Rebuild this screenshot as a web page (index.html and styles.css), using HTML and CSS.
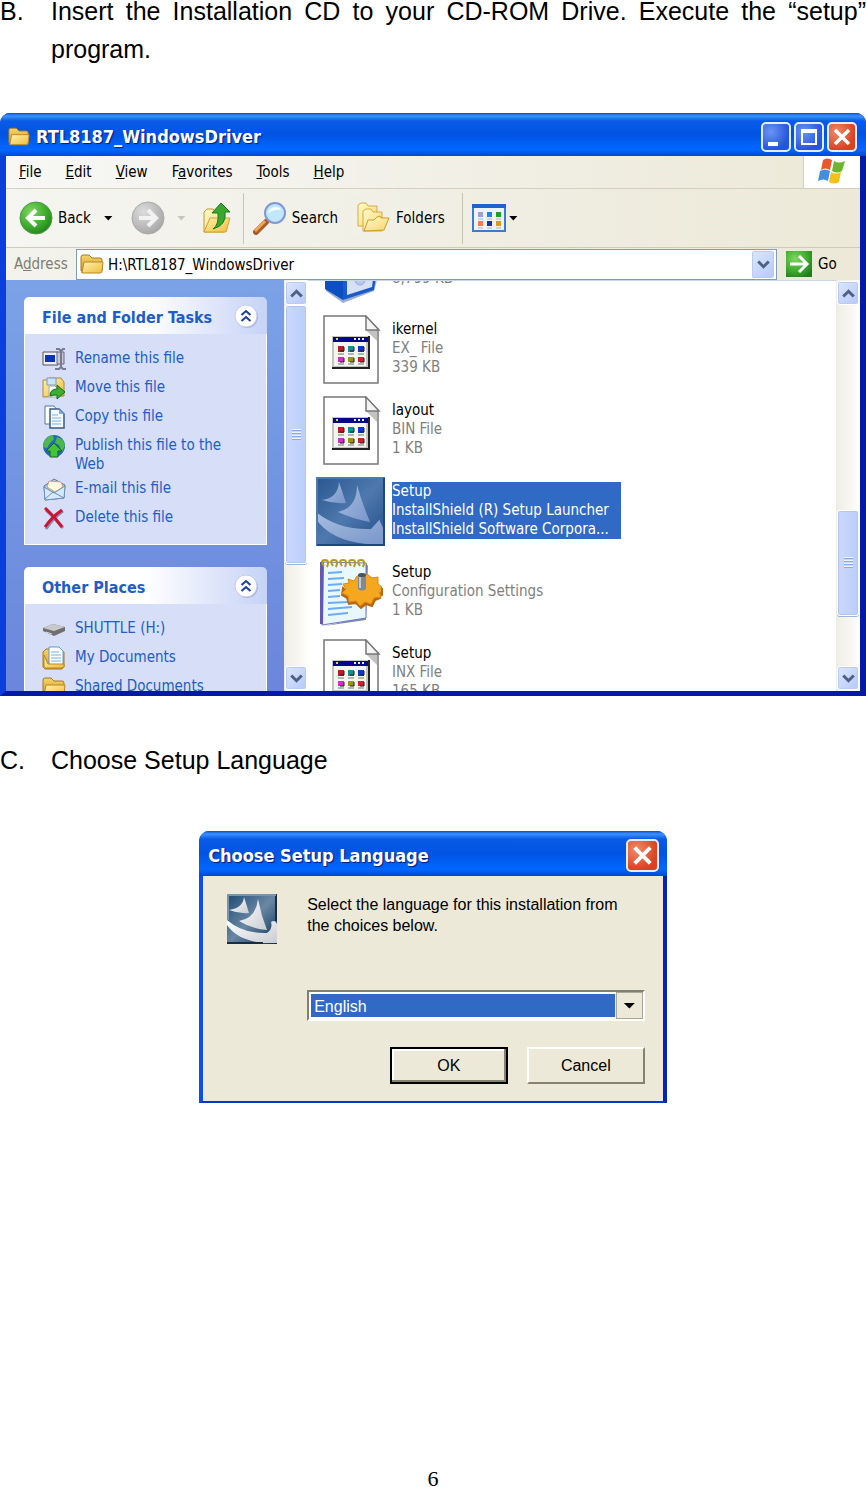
FILE: index.html
```html
<!DOCTYPE html>
<html lang="en">
<head>
    <meta charset="UTF-8">
    <meta name="viewport" content="width=device-width, initial-scale=1.0">
    <title>Driver Installation Guide</title>
    <link rel="stylesheet" href="styles.css">
</head>
<body>
    <!-- Shared icons -->
    <svg class="defs" aria-hidden="true">
        <defs>
            <linearGradient id="gold" x1="0" y1="0" x2="1" y2="1"><stop offset="0" stop-color="#fff3ae"/><stop offset="1" stop-color="#eebc3c"/></linearGradient>
            <linearGradient id="goldBack" x1="0" y1="0" x2="0" y2="1"><stop offset="0" stop-color="#f5d569"/><stop offset="1" stop-color="#d8992a"/></linearGradient>
            <linearGradient id="paleGold" x1="0" y1="0" x2="1" y2="1"><stop offset="0" stop-color="#fffbd0"/><stop offset="1" stop-color="#f7d667"/></linearGradient>
            <radialGradient id="green" cx=".35" cy=".3" r=".8"><stop offset="0" stop-color="#7dd65f"/><stop offset=".6" stop-color="#3cab2c"/><stop offset="1" stop-color="#1f7d1c"/></radialGradient>
            <radialGradient id="grey" cx=".35" cy=".3" r=".8"><stop offset="0" stop-color="#dcdcdc"/><stop offset="1" stop-color="#a3a3a3"/></radialGradient>
            <linearGradient id="navy" x1="0" y1="0" x2="1" y2="1"><stop offset="0" stop-color="#1e4a74"/><stop offset=".5" stop-color="#6888a4"/><stop offset="1" stop-color="#0c2d50"/></linearGradient>
            <linearGradient id="sail" x1="0" y1="0" x2="1" y2="1"><stop offset="0" stop-color="#ffffff"/><stop offset="1" stop-color="#c9ccd2"/></linearGradient>
            <linearGradient id="blueTile" x1="0" y1="0" x2="1" y2="1"><stop offset="0" stop-color="#27568f"/><stop offset=".5" stop-color="#4f79ae"/><stop offset="1" stop-color="#1d4a86"/></linearGradient>
            <linearGradient id="blueSail" x1="0" y1="0" x2="1" y2="1"><stop offset="0" stop-color="#a9bee0"/><stop offset="1" stop-color="#7896ca"/></linearGradient>
        </defs>
        <symbol id="folder" viewBox="0 0 24 22">
            <path d="M1 18V4q0-2 2-2h6l3 3h8q2 0 2 2v11z" fill="url(#goldBack)" stroke="#a8781c"/>
            <path d="M2 19.500L4 9h19l-1 9q0 2-2 2H3q-2 0-1-1z" fill="url(#gold)" stroke="#b98720"/>
        </symbol>
        <symbol id="appfile" viewBox="0 0 69 69">
            <path d="M8 1h41l13 13v54H8z" fill="#fff" stroke="#777" stroke-width="1.500"/>
            <path d="M50 15l12 12V15z" fill="#999" opacity=".6"/>
            <path d="M50 1v14h13z" fill="#f4f4f4" stroke="#777" stroke-width="1.500"/>
            <path d="M16 21h38v33H16z" fill="#222"/>
            <path d="M16 21h36v31H16z" fill="#c6c5bd"/>
            <path d="M18 27h32v24H18z" fill="#f5f5f0"/>
            <path d="M17 22h35v5H17z" fill="#06068c"/>
            <path d="M20 23h2v2h-2z" fill="#dfd830"/>
            <path d="M38 23h2v2h-2zM42 23h2v2h-2zM46 23h2v2h-2z" fill="#eee"/>
            <path d="M22 31h6v6h-6z" fill="#c0182b"/><path d="M32 31h6v6h-6z" fill="#169191"/><path d="M42 31h6v6h-6z" fill="#1237cf"/>
            <path d="M22 42h6v5h-6z" fill="#d42bc9"/><path d="M32 42h6v5h-6z" fill="#96951b"/><path d="M42 42h6v5h-6z" fill="#cf1f32"/>
            <path d="M22 39h6M32 39h6M42 39h6M22 49h6M32 49h6M42 49h6" stroke="#777"/>
            <path d="M24 36h4v-4M34 36h4v-4M44 36h4v-4M24 47h4v-4M34 47h4v-4M44 47h4v-4" fill="none" stroke="#222"/>
        </symbol>
        <symbol id="chevrons" viewBox="0 0 26 26">
            <circle cx="14" cy="14" r="11" fill="#8d9cc8" opacity=".6"/>
            <circle cx="13" cy="13" r="11" fill="#fff" stroke="#c3cbe6"/>
            <path d="M8.500 12l4.500-4 4.500 4M8.500 18l4.500-4 4.500 4" fill="none" stroke="#1a3f9c" stroke-width="2"/>
        </symbol>
        <symbol id="up" viewBox="0 0 20 20"><path d="M3 14l7-7 7 7" fill="none" stroke="#4d6185" stroke-width="4"/></symbol>
        <symbol id="down" viewBox="0 0 20 20"><path d="M3 6l7 7 7-7" fill="none" stroke="#4d6185" stroke-width="4"/></symbol>
        <symbol id="cross" viewBox="0 0 26 26"><path d="M6 6l14 14M20 6L6 20" stroke="#fff" stroke-width="3.500"/></symbol>
    </svg>

    <main class="page">
        <section class="step">
            <span class="letter">B.</span>
            <p>Insert the Installation CD to your CD-ROM Drive. Execute the “setup” program.</p>
        </section>

        <div class="window">
            <div class="title-bar">
                <svg class="title-icon"><use href="#folder"/></svg>
                <h2>RTL8187_WindowsDriver</h2>
                <button class="win-btn" aria-label="Minimize"><svg viewBox="0 0 26 26"><path d="M5 18h10v4H5z" fill="#fff"/></svg></button>
                <button class="win-btn" aria-label="Maximize"><svg viewBox="0 0 26 26"><path d="M6 7h14v13H6z" fill="none" stroke="#fff" stroke-width="2"/><path d="M5 5h16v4H5z" fill="#fff"/></svg></button>
                <button class="win-btn close" aria-label="Close"><svg><use href="#cross"/></svg></button>
            </div>

            <div class="menu-bar">
                <nav>
                    <button><u>F</u>ile</button>
                    <button><u>E</u>dit</button>
                    <button><u>V</u>iew</button>
                    <button>F<u>a</u>vorites</button>
                    <button><u>T</u>ools</button>
                    <button><u>H</u>elp</button>
                </nav>
                <div class="flag">
                    <svg viewBox="0 0 30 28">
                        <path d="M6 3q4-3 9 0l-2 10q-5-3-9 0z" fill="#e8582a"/>
                        <path d="M17 4q5 3 11 0l-3 10q-5 3-10 0z" fill="#6ab62e"/>
                        <path d="M3 14q5-3 10 0l-2 10q-5-3-10 0z" fill="#4290dc"/>
                        <path d="M14 15q5 3 10 0l-2 10q-5 3-10 0z" fill="#f3c117"/>
                    </svg>
                </div>
            </div>

            <div class="toolbar">
                <button class="tool">
                    <svg class="icon-lg" viewBox="0 0 34 34"><circle cx="17" cy="17" r="16" fill="url(#green)" stroke="#4b9a43"/><path d="M26 17H10M17 9l-8 8 8 8" fill="none" stroke="#fff" stroke-width="4"/></svg>
                    Back
                </button>
                <button class="arrow" aria-label="Back history"></button>
                <button class="tool" aria-label="Forward">
                    <svg class="icon-lg" viewBox="0 0 34 34"><circle cx="17" cy="17" r="16" fill="url(#grey)" stroke="#aaa"/><path d="M8 17h16M17 9l8 8-8 8" fill="none" stroke="#f2f2f2" stroke-width="4"/></svg>
                </button>
                <button class="arrow off" aria-label="Forward history"></button>
                <button class="tool" aria-label="Up">
                    <svg class="icon-lg" viewBox="0 0 34 34">
                        <path d="M4 31V11l3-3h6l3 3h8v20z" fill="url(#paleGold)" stroke="#c8962a"/>
                        <path d="M4 31l6-14h20l-4 14z" fill="url(#gold)" stroke="#d3a034"/>
                        <path d="M13 28q6-4 5-16h-6l9-10 9 9h-5q2 13-12 17z" fill="#39a82f" stroke="#1d7a1d"/>
                    </svg>
                </button>
                <span class="divider"></span>
                <button class="tool">
                    <svg class="icon-lg" viewBox="0 0 34 34">
                        <path d="M3 31l10-10" stroke="#a95d28" stroke-width="6" stroke-linecap="round"/>
                        <path d="M2 30l10-10" stroke="#f1a65a" stroke-width="3"/>
                        <circle cx="22" cy="12" r="10" fill="#c0e7fb" stroke="#8296d4" stroke-width="2"/>
                        <path d="M15 13q1-7 8-7 4 0 5 3-7-1-13 4z" fill="#f3fcff"/>
                    </svg>
                    Search
                </button>
                <button class="tool folders">
                    <svg class="icon-lg" viewBox="0 0 34 34">
                        <path d="M1 25V4l3-2h5l2 3h9v20z" fill="url(#paleGold)" stroke="#d9ab40"/>
                        <path d="M6 30V10l3-2h5l2 3h9v19z" fill="url(#paleGold)" stroke="#d9ab40"/>
                        <path d="M7 30l4-11h6l3-3 3-1 1 2h8l-5 12z" fill="url(#paleGold)" stroke="#cf9a2c"/>
                    </svg>
                    Folders
                </button>
                <span class="divider"></span>
                <button class="tool" aria-label="Views">
                    <svg class="icon-lg" viewBox="0 0 34 34">
                        <path d="M1 4h32v26H1z" fill="#eaf3ff" stroke="#3a7cd2" stroke-width="2"/>
                        <path d="M0 3h34v4H0z" fill="#1c62d4"/>
                        <path d="M6 11h5v5H6z" fill="#a79dc9"/><path d="M15 11h5v5h-5z" fill="#1d84e6"/><path d="M24 11h5v5h-5z" fill="#1aa321"/>
                        <path d="M6 20h5v5H6z" fill="#fb7a4c"/><path d="M15 20h5v5h-5z" fill="#12389c"/><path d="M24 20h5v5h-5z" fill="#d5a011"/>
                        <path d="M6 18h5M15 18h5M24 18h5M6 27h5M15 27h5M24 27h5" stroke="#b4b4b4"/>
                    </svg>
                </button>
                <button class="arrow last" aria-label="View options"></button>
            </div>

            <div class="address-bar">
                <label for="address">A<u>d</u>dress</label>
                <div class="address-field">
                    <svg class="icon"><use href="#folder"/></svg>
                    <input id="address" type="text" value="H:\RTL8187_WindowsDriver">
                    <button class="scroll-btn" aria-label="Show addresses"><svg><use href="#down"/></svg></button>
                </div>
                <button class="go">
                    <svg viewBox="0 0 26 26"><path d="M0 0h26v26H0z" fill="url(#green)"/><path d="M4 13h16M13 5l8 8-8 8" fill="none" stroke="#fff" stroke-width="3"/></svg>
                    Go
                </button>
            </div>

            <div class="content">
                <aside class="sidebar">
                    <section class="panel">
                        <header>
                            <h3>File and Folder Tasks</h3>
                            <button aria-label="Collapse tasks"><svg><use href="#chevrons"/></svg></button>
                        </header>
                        <ul>
                            <li>
                                <svg class="icon" viewBox="0 0 24 24"><path d="M1 5h15v13H1z" fill="#eef" stroke="#555"/><path d="M3 8h10v7H3z" fill="#0a35b8"/><path d="M15 5h7v12h-7z" fill="#c9c9d4" stroke="#666a80"/><path d="M14 2h3l2 2 2-2h2M19 3v18M13 22h4l2-2 2 2h3" fill="none" stroke="#777a92" stroke-width="2"/></svg>
                                <a href="#">Rename this file</a>
                            </li>
                            <li>
                                <svg class="icon" viewBox="0 0 24 24"><path d="M1 21V4h4l2-2h12l3 4v14z" fill="url(#gold)" stroke="#a78545"/><path d="M5 2h9v7H5z" fill="#c9e5fb" stroke="#7c9cc0"/><path d="M7 10h6l3 3v8H7z" fill="#fff" stroke="#aaa"/><path d="M8 20q0-7 7-7v-4l8 7-8 7v-4q-4 0-7 1z" fill="#3caf2e" stroke="#17681a"/></svg>
                                <a href="#">Move this file</a>
                            </li>
                            <li>
                                <svg class="icon" viewBox="0 0 24 24"><path d="M3 1h9l3 4v14H3z" fill="#fff" stroke="#53789c"/><path d="M8 4h9l5 5v14H8z" fill="#f2faff" stroke="#3a5d80" stroke-width="1.500"/><path d="M17 4v5h5z" fill="#78b4dc"/><path d="M10 10h6M10 13h9M10 16h9M10 19h9" stroke="#7fb2da"/></svg>
                                <a href="#">Copy this file</a>
                            </li>
                            <li>
                                <svg class="icon" viewBox="0 0 24 24"><circle cx="12" cy="12" r="11" fill="#2468bc"/><path d="M2 8q3-6 9-7l1 4-4 4-3 5-4-1zM15 3q6 1 8 8l-3 7-3-7-4-2z" fill="#4fb948"/><path d="M12 9l8 8h-4v6H8v-6H4z" fill="#45c336" stroke="#15641a"/></svg>
                                <a href="#">Publish this file to the Web</a>
                            </li>
                            <li>
                                <svg class="icon" viewBox="0 0 24 24"><path d="M2 9l10-7 11 6-1 13-19 2z" fill="#a7c8ea" stroke="#5d7899"/><path d="M5 10l2-6 12 1 2 5-8 5z" fill="#fff8e5" stroke="#caa76c"/><path d="M2 10l10 6 11-7-1 12-19 2z" fill="#d4e9fc" stroke="#6f90b5"/><path d="M3 22l8-7 11 6" fill="none" stroke="#6f90b5"/></svg>
                                <a href="#">E-mail this file</a>
                            </li>
                            <li>
                                <svg class="icon" viewBox="0 0 24 24"><path d="M4 4q8 7 17 18M21 5Q11 12 4 23" fill="none" stroke="#8a8fa8" stroke-width="3"/><path d="M3 2q9 8 17 19M20 4Q10 11 3 21" fill="none" stroke="#cf1335" stroke-width="3"/></svg>
                                <a href="#">Delete this file</a>
                            </li>
                        </ul>
                    </section>

                    <section class="panel">
                        <header>
                            <h3>Other Places</h3>
                            <button aria-label="Collapse places"><svg><use href="#chevrons"/></svg></button>
                        </header>
                        <ul>
                            <li>
                                <svg class="icon" viewBox="0 0 24 24"><path d="M1 11l10-4 12 3v4l-11 5-11-5z" fill="#6f6f6f"/><path d="M1 11l10-4 12 3-11 4z" fill="#c9c9c9"/><path d="M4 15l6 2" stroke="#ddd"/></svg>
                                <a href="#">SHUTTLE (H:)</a>
                            </li>
                            <li>
                                <svg class="icon" viewBox="0 0 24 24"><path d="M1 21V6l3-3h5l2 3h11v15l-2 2H3z" fill="url(#goldBack)" stroke="#a8781c"/><path d="M7 1h10l4 4v14H7z" fill="#fff" stroke="#5f96cb"/><path d="M9 6h8M9 9h10M9 12h10M9 15h10" stroke="#6faee2"/><path d="M2 22V9l4 9h16v3l-2 1z" fill="url(#gold)" stroke="#b98720"/></svg>
                                <a href="#">My Documents</a>
                            </li>
                            <li>
                                <svg class="icon"><use href="#folder"/></svg>
                                <a href="#">Shared Documents</a>
                            </li>
                        </ul>
                    </section>
                </aside>

                <div class="scrollbar tasks-scroll">
                    <button class="scroll-btn" aria-label="Scroll tasks up"><svg><use href="#up"/></svg></button>
                    <div class="track"><div class="thumb"></div></div>
                    <button class="scroll-btn" aria-label="Scroll tasks down"><svg><use href="#down"/></svg></button>
                </div>

                <div class="file-pane">
                    <ul class="files">
                        <li class="cut">
                            <svg class="file-icon" viewBox="0 35 69 34"><path d="M10 35h54l-6 22-31 12-17-12z" fill="#9caed0"/><path d="M9 35l18 6v25L9 55z" fill="#0b4fc0"/><path d="M27 41l34-6-3 21-31 10z" fill="#1b5bc9"/><path d="M31 42l27-5-2 16-25 8z" fill="#d7e1f6"/><circle cx="44" cy="46" r="5" fill="#b8c7ec" stroke="#94a7d8"/></svg>
                            <p class="info"><span>8,799 KB</span></p>
                        </li>
                        <li>
                            <svg class="file-icon"><use href="#appfile"/></svg>
                            <p class="info"><b>ikernel</b><span>EX_ File</span><span>339 KB</span></p>
                        </li>
                        <li>
                            <svg class="file-icon"><use href="#appfile"/></svg>
                            <p class="info"><b>layout</b><span>BIN File</span><span>1 KB</span></p>
                        </li>
                        <li class="selected">
                            <svg class="file-icon" viewBox="0 0 69 69">
                                <path d="M0 0h69v69H0z" fill="url(#blueTile)"/>
                                <path d="M23 5l7 21q-12 1-24-3 16-2 17-18z" fill="url(#blueSail)"/>
                                <path d="M41 8q5 18 13 37-17-3-32-10 19-4 19-27z" fill="url(#blueSail)"/>
                                <path d="M0 35q22 18 55 17l9-10 5 5v20H50Q14 63 0 42z" fill="url(#blueSail)"/>
                                <path d="M63 42q4-3 6 1l-2 8z" fill="#34629f"/>
                                <path d="M1 68V1h67" fill="none" stroke="#5078b0" stroke-width="2"/>
                                <path d="M1 68h67V1" fill="none" stroke="#1e477c" stroke-width="2"/>
                            </svg>
                            <p class="info"><b>Setup</b><span>InstallShield (R) Setup Launcher</span><span>InstallShield Software Corpora...</span></p>
                        </li>
                        <li>
                            <svg class="file-icon" viewBox="0 0 69 69">
                                <path d="M8 68l42-6 2-54-2-3v54z" fill="#7f8ca0"/>
                                <path d="M5 4l45 1v55L6 67z" fill="#e9f8ff" stroke="#6a75c9"/>
                                <path d="M4 4h4L7 66H4z" fill="#6159b6"/>
                                <path d="M12 15l14-1M12 21l16-1M12 27l14-1M12 33l12-1M12 39l12-1M12 45l20-1M12 51l24-2M12 57l20-2" stroke="#6cacf0" stroke-width="2"/>
                                <path d="M8 8q-4-6 1-6t2 7M17 8q-4-6 1-6t2 7M26 8q-4-6 1-6t2 7M35 8q-4-6 1-6t2 7M44 8q-4-6 1-6t2 7" fill="none" stroke="#b59b1c" stroke-width="2"/>
                                <path d="M27 30l6 6 1 6 7-1 4 5 5-4 6 2 3-6 7-1v-7l-2 10-5 2-3 6-6-2-5 4-5-5-7 1-2-6-5-3z" fill="#b9690d" stroke="#b9690d" stroke-width="2"/>
                                <path d="M32 21l6 2 3-5 7 1 3-3 5 4 6-1v7l4 3-3 4 2 6-7 1-3 6-6-2-5 4-4-5-7 1-1-6-6-3 4-4-3-5 6-1z" fill="#f5a81f" stroke="#d58a18"/>
                                <path d="M42 17q4-4 8 0v14q-4 3-8 0z" fill="#7f8994"/><ellipse cx="46" cy="17" rx="4" ry="2" fill="#4d545c"/><path d="M44 19v11" stroke="#c3cad0" stroke-width="2"/>
                            </svg>
                            <p class="info"><b>Setup</b><span>Configuration Settings</span><span>1 KB</span></p>
                        </li>
                        <li>
                            <svg class="file-icon"><use href="#appfile"/></svg>
                            <p class="info"><b>Setup</b><span>INX File</span><span>165 KB</span></p>
                        </li>
                    </ul>
                </div>

                <div class="scrollbar files-scroll">
                    <button class="scroll-btn" aria-label="Scroll files up"><svg><use href="#up"/></svg></button>
                    <div class="track"><div class="thumb"></div></div>
                    <button class="scroll-btn" aria-label="Scroll files down"><svg><use href="#down"/></svg></button>
                </div>
            </div>
        </div>

        <section class="step">
            <span class="letter">C.</span>
            <p>Choose Setup Language</p>
        </section>

        <form class="dialog">
            <div class="title-bar">
                <h2>Choose Setup Language</h2>
                <button type="button" class="win-btn close" aria-label="Close"><svg><use href="#cross"/></svg></button>
            </div>
            <div class="dialog-body">
                <svg class="logo" viewBox="0 0 50 50">
                    <path d="M0 0h50v50H0z" fill="url(#navy)"/>
                    <path d="M17 3l5 16q-10 1-20-3 14-2 15-13z" fill="url(#sail)"/>
                    <path d="M31 5q3 16 9 31-15-1-28-9 17-3 19-22z" fill="url(#sail)"/>
                    <path d="M0 26q16 14 40 13 6-4 4-11 4-3 6 2v19H36Q10 46 0 31z" fill="url(#sail)"/>
                    <path d="M0 49h36M49 0v27" fill="none" stroke="#1b2c40" stroke-width="2"/>
                    <path d="M1 26V1h48" fill="none" stroke="#7796ad" stroke-width="2"/>
                </svg>
                <div class="fields">
                    <label for="language">Select the language for this installation from the choices below.</label>
                    <div class="select-box">
                        <select id="language">
                            <option>English</option>
                        </select>
                        <span class="select-arrow"></span>
                    </div>
                </div>
                <div class="actions">
                    <button type="button" class="btn default">OK</button>
                    <button type="button" class="btn">Cancel</button>
                </div>
            </div>
        </form>

        <footer>6</footer>
    </main>
</body>
</html>
```
FILE: styles.css
```css
* {
    margin: 0;
    padding: 0;
    box-sizing: border-box;
}

body {
    background: #fff;
    color: #000;
    font-family: "Liberation Sans", Arial, sans-serif;
}

ul {
    list-style: none;
}

svg {
    display: block;
    flex-shrink: 0;
}

button {
    border: none;
    background: none;
    font: inherit;
    color: inherit;
}

.defs {
    position: absolute;
    width: 0;
    height: 0;
}

.page {
    display: flex;
    flex-direction: column;
    min-height: 100vh;
}

/* Numbered steps */
.step {
    display: flex;
    font-size: 25px;
    line-height: 38px;
}

.step:first-child {
    margin-top: -8px;
}

.letter {
    width: 51px;
    flex-shrink: 0;
}

.step p {
    flex: 1;
    text-align: justify;
}

/* Explorer window */
.window {
    margin: 45px 0;
    border: solid;
    border-width: 0 6px 5px;
    border-color: #0a3fdc #0519a8 #0519a8 #0a3fdc;
    border-radius: 10px 10px 0 0;
    background: #0a3fdc;
    font-family: "DejaVu Sans Condensed", "DejaVu Sans", sans-serif;
    font-size: 15px;
    line-height: 19px;
}

.title-bar {
    display: flex;
    align-items: center;
    gap: 3px;
    height: 43px;
    margin: 0 -6px;
    padding: 4px 9px 0 8px;
    border-radius: 10px 10px 0 0;
    background: linear-gradient(#0a4fd0 0, #3b92ff 3px, #0a5ae6 8px, #0054e3 50%, #0067ff 85%, #0049d0 100%);
    color: #fff;
}

.title-icon {
    width: 22px;
    height: 21px;
    margin-right: 3px;
}

.title-bar h2 {
    flex: 1;
    font-size: 18px;
    line-height: 24px;
    text-shadow: 1px 1px 1px #0a1883;
}

.win-btn {
    width: 30px;
    height: 30px;
    border: 2px solid #e4edff;
    border-radius: 5px;
    background: radial-gradient(circle at 30% 30%, #6c94f5, #2456dc 70%);
}

.win-btn svg {
    width: 26px;
    height: 26px;
}

.win-btn.close {
    background: radial-gradient(circle at 30% 30%, #f08a6c, #d9431f 70%);
}

.menu-bar {
    display: flex;
    height: 33px;
    border-bottom: 1px solid #d4d0bf;
    background: linear-gradient(90deg, #f7f7f5, #ece9d8);
}

.menu-bar nav {
    display: flex;
    flex: 1;
    align-items: center;
    gap: 24px;
    padding-left: 13px;
}

.flag {
    display: flex;
    justify-content: center;
    width: 57px;
    border-left: 1px solid #d4d0bf;
    background: #fff;
}

.flag svg {
    width: 30px;
    height: 30px;
}

.toolbar {
    display: flex;
    align-items: center;
    height: 59px;
    padding-left: 13px;
    border-bottom: 1px solid #cfcbb9;
    background: linear-gradient(90deg, #f5f5f1, #ece9d8);
}

.tool {
    display: flex;
    align-items: center;
    gap: 5px;
}

.icon-lg {
    width: 34px;
    height: 34px;
}

.arrow {
    width: 9px;
    height: 5px;
    margin: 0 18px 0 13px;
    background: #000;
    clip-path: polygon(0 0, 100% 0, 50% 100%);
}

.arrow.off {
    margin-left: 12px;
    margin-right: 14px;
    background: #c5c4bd;
}

.arrow.last {
    margin: 0 0 0 3px;
}

.divider {
    width: 1px;
    height: 51px;
    margin: 0 9px;
    background: #c9c6b4;
}

.tool.folders {
    margin: 0 8px 0 19px;
}

.address-bar {
    display: flex;
    align-items: center;
    height: 32px;
    padding-left: 8px;
    background: linear-gradient(90deg, #f3f2ec, #ece9d8);
}

.address-bar label {
    width: 62px;
    color: #7f7d72;
}

.address-field {
    display: flex;
    flex: 1;
    align-items: center;
    gap: 4px;
    height: 31px;
    padding: 0 1px 0 3px;
    border: 1px solid #7f9db9;
    background: #fff;
}

.address-field input {
    flex: 1;
    min-width: 0;
    padding-top: 2px;
    border: none;
    outline: none;
    background: none;
    font: inherit;
}

.icon {
    width: 24px;
    height: 24px;
}

.go {
    display: flex;
    align-items: center;
    gap: 6px;
    width: 83px;
    padding-left: 9px;
}

.go svg {
    width: 26px;
    height: 26px;
}

.content {
    display: flex;
    height: 411px;
    background: #fff;
}

.sidebar {
    display: flex;
    flex-direction: column;
    gap: 22px;
    width: 278px;
    padding: 17px 17px 0 18px;
    overflow: hidden;
    background: linear-gradient(#7ba2e7, #6b86dc);
}

.panel {
    flex-shrink: 0;
}

.panel header {
    display: flex;
    align-items: center;
    justify-content: space-between;
    height: 37px;
    padding: 0 8px 0 18px;
    border-radius: 5px 5px 0 0;
    background: linear-gradient(90deg, #fff 50%, #c6d3f7);
    color: #215dc6;
}

.panel h3 {
    padding-top: 4px;
    font-size: 16px;
}

.panel header svg {
    width: 26px;
    height: 26px;
}

.panel ul {
    display: flex;
    flex-direction: column;
    gap: 5px;
    padding: 15px 17px 12px;
    border: solid #fff;
    border-width: 0 1px 1px;
    background: #d6dff7;
}

.panel li {
    display: flex;
    gap: 9px;
    min-height: 24px;
}

.panel .icon {
    margin-top: -2px;
}

.panel a {
    color: #215dc6;
    text-decoration: none;
}

/* Scrollbars */
.scrollbar {
    display: flex;
    flex-direction: column;
    width: 24px;
    padding: 1px;
    background: linear-gradient(90deg, #eeede5, #fefefb);
}

.scroll-btn {
    display: flex;
    align-items: center;
    justify-content: center;
    width: 22px;
    height: 24px;
    border: 1px solid #fff;
    border-radius: 3px;
    background: linear-gradient(135deg, #dce7ff, #b5c9f7);
    box-shadow: inset 0 0 0 1px #b9cbf3;
}

.address-field .scroll-btn {
    width: 24px;
    height: 29px;
}

.scroll-btn svg {
    width: 15px;
    height: 15px;
}

.track {
    flex: 1;
}

.thumb {
    display: flex;
    align-items: center;
    justify-content: center;
    border: 1px solid #fff;
    border-radius: 3px;
    background: linear-gradient(90deg, #c9d8fd, #bacdfb);
    box-shadow: inset 0 0 0 1px #b3c6f3, 0 1px 0 #9db4df;
}

.thumb::after {
    content: "";
    width: 9px;
    height: 12px;
    background: repeating-linear-gradient(#eef4ff 0 1px, #8ca8e4 1px 2px, #c5d5fc 2px 3px);
}

.tasks-scroll .thumb {
    height: 259px;
}

.files-scroll .thumb {
    height: 106px;
    margin-top: 205px;
}

/* File list */
.file-pane {
    flex: 1;
    overflow: hidden;
    border-top: 1px solid #c8d6e8;
}

.files {
    display: flex;
    flex-direction: column;
    gap: 12px;
    margin-top: -12px;
    padding-left: 8px;
}

.files li {
    display: flex;
    gap: 7px;
    height: 69px;
}

.files li.cut {
    height: 34px;
}

.file-icon {
    width: 69px;
    height: 69px;
}

.cut .file-icon {
    height: 34px;
}

.info {
    align-self: flex-start;
    margin-top: 5px;
    color: #808080;
}

.cut .info {
    margin-top: 0;
}

.info b,
.info span {
    display: block;
    font-weight: normal;
}

.info b {
    color: #000;
}

.selected .info {
    padding-right: 12px;
}

.selected .info,
.selected .info b {
    background: #316ac5;
    color: #fff;
}

/* Language dialog */
.dialog {
    width: 54%;
    margin: 7px auto 0;
    border: solid;
    border-width: 0 4px 2px;
    border-color: #0a4fe6 #0523b5 #0a35d0 #0a4fe6;
    border-radius: 10px 10px 0 0;
    background: #0a4fe6;
    font-size: 16px;
    line-height: 21px;
}

.window ~ .step {
    margin-bottom: 45px;
}

.dialog .title-bar {
    height: 45px;
    margin: 0 -4px;
    padding: 4px 8px 0 9px;
    font-family: "DejaVu Sans Condensed", "DejaVu Sans", sans-serif;
}

.dialog .win-btn {
    width: 33px;
    height: 33px;
}

.dialog .win-btn svg {
    width: 29px;
    height: 29px;
}

.dialog-body {
    display: grid;
    grid-template-columns: 50px 1fr;
    column-gap: 30px;
    padding: 18px 18px 17px 24px;
    background: #ece9d8;
}

.logo {
    width: 50px;
    height: 50px;
}

.fields {
    display: flex;
    flex-direction: column;
    gap: 54px;
}

.fields label {
    padding-right: 16px;
}

.select-box {
    position: relative;
    height: 31px;
    border: 2px solid;
    border-color: #808073 #fff #fff #808073;
    background: #fff;
}

.select-box select {
    width: 100%;
    height: 27px;
    padding: 2px 0 0 3px;
    border: 2px solid #fff;
    border-right: 28px solid #ece9d8;
    outline: none;
    appearance: none;
    background: #316ac5;
    color: #fff;
    font: inherit;
}

.select-arrow {
    position: absolute;
    top: 0;
    right: 0;
    display: flex;
    align-items: center;
    justify-content: center;
    width: 27px;
    height: 27px;
    border: 1px solid #aaa794;
    background: #ece9d8;
    pointer-events: none;
}

.select-arrow::after {
    content: "";
    width: 12px;
    height: 6px;
    background: #000;
    clip-path: polygon(0 0, 100% 0, 50% 100%);
}

.actions {
    display: flex;
    grid-column: 1 / 3;
    justify-content: flex-end;
    gap: 19px;
    margin-top: 26px;
}

.btn {
    width: 118px;
    height: 37px;
    border: 2px solid;
    border-color: #fff #85826f #85826f #fff;
    background: #ece9d8;
}

.btn.default {
    border-color: #000;
    box-shadow: inset -2px -2px 0 #85826f, inset 2px 2px 0 #fff;
}

footer {
    margin-top: auto;
    font-family: "Liberation Serif", "Times New Roman", serif;
    font-size: 22px;
    line-height: 16px;
    text-align: center;
}
```
